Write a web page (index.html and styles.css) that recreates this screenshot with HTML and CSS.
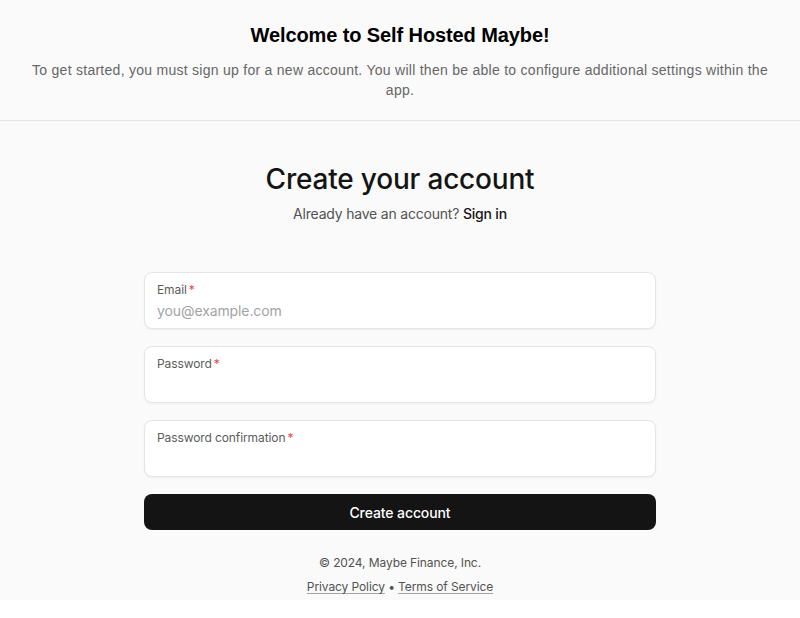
FILE: index.html
```html
<!DOCTYPE html>
<html lang="en">
<head>
<meta charset="utf-8">
<title>Create your account</title>
<link rel="stylesheet" href="styles.css">
</head>
<body>
<div class="page">
  <header class="intro">
    <h1 class="intro-title">Welcome to Self Hosted Maybe!</h1>
    <p class="intro-text">To get started, you must sign up for a new account. You will then be able to configure additional settings within the app.</p>
  </header>
  <main class="main">
    <h2 class="title">Create your account</h2>
    <p class="subtitle">Already have an account? <a class="link-strong" href="#">Sign in</a></p>
    <form class="form">
      <label class="field">
        <span class="field-label">Email<span class="req">*</span></span>
        <input class="field-input" type="email" placeholder="you@example.com">
      </label>
      <label class="field">
        <span class="field-label">Password<span class="req">*</span></span>
        <input class="field-input" type="password">
      </label>
      <label class="field">
        <span class="field-label">Password confirmation<span class="req">*</span></span>
        <input class="field-input" type="password">
      </label>
      <button class="btn" type="button">Create account</button>
    </form>
    <footer class="footer">
      <p class="copy">© 2024, Maybe Finance, Inc.</p>
      <p class="legal"><a href="#" class="legal-link">Privacy Policy</a> • <a href="#" class="legal-link">Terms of Service</a></p>
    </footer>
  </main>
</div>
</body>
</html>
```

FILE: styles.css
```css
* { box-sizing: border-box; }
html, body { margin: 0; padding: 0; background: #ffffff; }
body { font-family: Inter, "Noto Sans", sans-serif; color: #141414; }
.page { background: #fafafa; height: 600px; }
.intro {
  text-align: center;
  border-bottom: 1px solid #e5e5e5;
  padding: 21px 24px 0;
  height: 121px;
}
.intro-title {
  margin: 0;
  font-family: "Liberation Sans", Arial, sans-serif;
  font-size: 20px;
  line-height: 28px;
  font-weight: 700;
  letter-spacing: -0.1px;
  color: #000;
}
.intro-text {
  margin: 11px 0 0;
  font-family: "Liberation Sans", Arial, sans-serif;
  font-size: 14px;
  line-height: 20px;
  letter-spacing: 0.27px;
  color: #666;
}
.main {
  width: 512px;
  margin: 0 auto;
  padding-top: 41px;
  text-align: center;
}
.title {
  margin: 0;
  font-size: 28px;
  line-height: 34px;
  font-weight: 500;
  letter-spacing: -0.2px;
  color: #141414;
}
.subtitle {
  margin: 8px 0 0;
  font-size: 14px;
  line-height: 20px;
  letter-spacing: -0.2px;
  color: #525252;
}
.link-strong { color: #141414; font-weight: 500; text-decoration: none; }
.form {
  margin-top: 48px;
  display: flex;
  flex-direction: column;
  gap: 17px;
  text-align: left;
}
.field {
  display: flex;
  flex-direction: column;
  height: 57px;
  padding: 9px 12px 0;
  background: #fff;
  border: 1px solid #e5e5e5;
  border-radius: 8px;
  box-shadow: 0 1px 2px rgba(0,0,0,0.05);
}
.field-label {
  font-size: 12px;
  line-height: 16px;
  letter-spacing: -0.1px;
  color: #5c5c5c;
}
.req { color: #ef4444; margin-left: 2px; }
.field-input {
  margin-top: 3px;
  border: 0;
  padding: 0;
  outline: none;
  background: transparent;
  font-family: inherit;
  font-size: 14px;
  line-height: 20px;
  height: 20px;
  letter-spacing: -0.1px;
  color: #141414;
}
.field-input::placeholder { color: #a3a3a3; }
.btn {
  height: 36px;
  border: 0;
  border-radius: 8px;
  background: #141414;
  color: #fff;
  font-family: inherit;
  font-size: 14px;
  font-weight: 500;
  letter-spacing: -0.1px;
}
.footer { margin-top: 25px; font-size: 12px; line-height: 16px; letter-spacing: -0.1px; color: #525252; }
.copy { margin: 0; }
.legal { margin: 8px 0 0; }
.legal-link { color: #525252; text-decoration: underline; text-decoration-color: #a3a3a3; text-underline-offset: 2px; }
```
